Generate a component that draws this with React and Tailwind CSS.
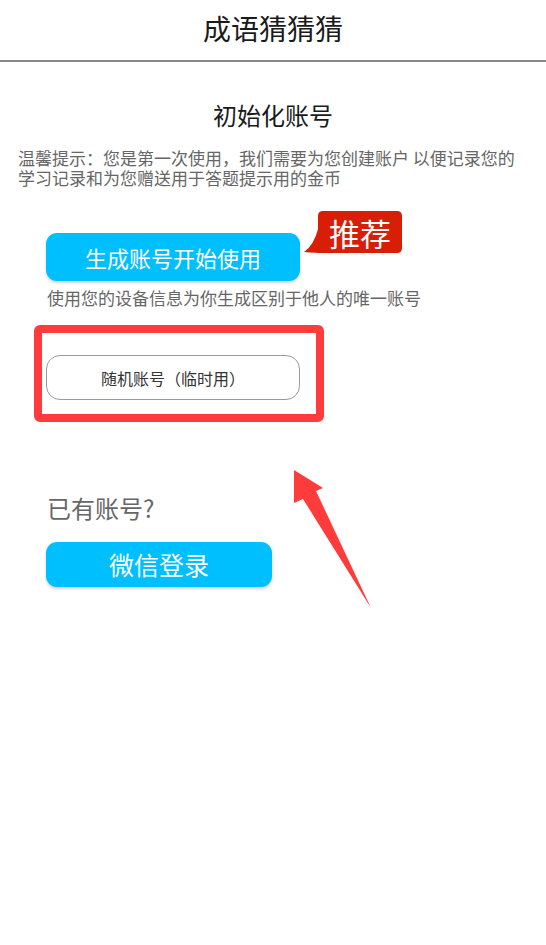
export default function App() {
  return (
    <div className="min-h-screen w-full bg-white relative overflow-hidden font-['Noto_Sans_CJK_SC','Noto_Sans',sans-serif]">
      {/* Header */}
      <header className="h-[62px] flex items-center justify-center border-b-2 border-[#888]">
        <h1 className="text-[28px] leading-[32px] text-[#1a1a1a] -mt-[4px]">成语猜猜猜</h1>
      </header>

      <main>
        <h2 className="mt-[37px] text-center text-[24px] leading-[32px] text-[#1a1a1a]">初始化账号</h2>
        <p className="mt-[17px] px-[18px] text-[17px] leading-[20px] text-[#666]">
          温馨提示：您是第一次使用，我们需要为您创建账户 以便记录您的学习记录和为您赠送用于答题提示用的金币
        </p>

        {/* Primary button with badge */}
        <div className="relative ml-[46px] mt-[45px] w-[254px]">
          <button className="w-[254px] h-[48px] rounded-[11px] bg-[#00bfff] text-white text-[22px] leading-none shadow-[0_2px_3px_rgba(0,0,0,0.18)]">
            生成账号开始使用
          </button>
          <div className="absolute left-[256px] -top-[22px] w-[100px] h-[44px]">
            <svg width="100" height="44" viewBox="0 0 100 44" className="absolute inset-0">
              <path
                d="M21 0 H95 Q100 0 100 5 V37 Q100 42 95 42 H22 Q14 42 2 41 Q12 34 16 18 V5 Q16 0 21 0 Z"
                fill="#d81e06"
              />
            </svg>
            <span className="absolute left-[16px] top-0 w-[84px] h-[42px] flex items-center justify-center text-white text-[31px] leading-none">
              推荐
            </span>
          </div>
        </div>

        <p className="ml-[47px] mt-[7px] text-[17px] leading-[20px] text-[#666]">使用您的设备信息为你生成区别于他人的唯一账号</p>

        {/* Temporary account button with red highlight frame */}
        <div className="relative ml-[46px] mt-[47px] w-[254px]">
          <button className="w-[254px] h-[45px] rounded-[14px] border border-[#9a9a9a] bg-white text-[16px] leading-none text-[#333]">
            随机账号（临时用）
          </button>
          <div className="absolute -left-[12px] -top-[30px] w-[290px] h-[97px] border-[8px] border-[#ff3b3b] rounded-[6px] pointer-events-none" />
        </div>

        <p className="ml-[47px] mt-[92px] text-[24px] leading-[32px] text-[#666]">已有账号?</p>

        <button className="ml-[46px] mt-[18px] w-[226px] h-[45px] rounded-[11px] bg-[#00bfff] text-white text-[25px] leading-none shadow-[0_2px_3px_rgba(0,0,0,0.18)]">
          微信登录
        </button>
      </main>

      {/* Annotation arrow */}
      <svg className="absolute left-[280px] top-[460px] pointer-events-none" width="100" height="160" viewBox="0 0 100 160">
        <polygon points="14,10 43,28 36,31 91,148 23,39 14,43" fill="#ff3b3b" />
      </svg>
    </div>
  );
}
